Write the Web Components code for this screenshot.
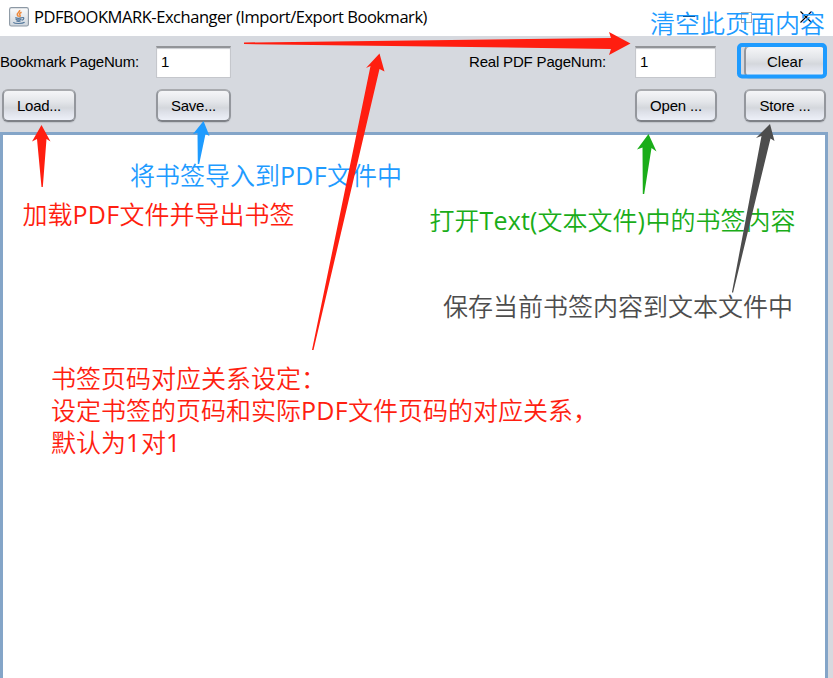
<!DOCTYPE html>
<html lang="zh-CN">
<head>
<meta charset="utf-8">
<title>PDFBOOKMARK-Exchanger</title>
<style>
html,body{margin:0;height:100%;overflow:hidden;background:#d6d9df}
body{font-family:"Liberation Sans",Arial,sans-serif;color:#000}
</style>
</head>
<body>
<bookmark-app></bookmark-app>
<script>
function define(name, html, setup) {
  const template = document.createElement('template');
  template.innerHTML = html.trim().replace(/>\s+</g, '><');
  customElements.define(name, class extends HTMLElement {
    constructor() {
      super();
      this.attachShadow({ mode: 'open' }).append(template.content.cloneNode(true));
    }
    connectedCallback() { if (setup) setup(this, this.shadowRoot); }
  });
}

// Text run whose letter spacing is tuned to fill the width given in "fit".
define('fit-text', `
<style>:host{display:inline-block;white-space:pre}:host([latin]){font-weight:400}span{display:inline-block}</style>
<span><slot></slot></span>`, (host, root) => {
  const span = root.querySelector('span');
  const target = parseFloat(host.getAttribute('fit'));
  const n = host.textContent.length;
  span.style.letterSpacing = ((target - span.getBoundingClientRect().width) / n) + 'px';
});

define('java-icon', `
<style>:host{display:block;width:20px;height:20px}svg{display:block}</style>
<svg width="20" height="20" viewBox="0 0 20 20">
  <defs><linearGradient id="g" x2="0" y2="1"><stop stop-color="#fcfcfc"/><stop offset="1" stop-color="#cfd6dd"/></linearGradient></defs>
  <rect x=".6" y=".6" width="18.8" height="18.4" rx="1.8" fill="url(#g)" stroke="#8c98a4" stroke-width="1.1"/>
  <path d="M10.6 3c1 1.9-3.3 3-2.3 4.8.4.8 1 1.200 1.200 1.900M12.600 5.300c-2 .8-2.600 1.600-1.700 2.700.5.7.2 1.300-.5 1.800" fill="none" stroke="#ef8a3c" stroke-width="1.500"/>
  <path d="M6.300 10.600c1.500.7 5 .6 6.500 0M6.600 12.300c1.500.6 4.400.6 5.700 0M7.400 13.900c1.300.5 3 .5 4.200 0M12.900 10.700c2.600-.9 2.500 2-.3 2.600M4.300 15.400c1.500 1.500 9 1.500 11.300-.2" fill="none" stroke="#54789c" stroke-width="1.200"/>
</svg>`);

define('title-bar', `
<style>
:host{display:flex;height:36px;background:#fff;align-items:center;box-sizing:border-box;padding:0 21px 2px 9px}
.t{flex:1;margin-left:5px;font:16.5px/24px "Open Sans","Noto Sans",sans-serif}
.c{display:flex;align-items:center}
svg{display:block}
</style>
<java-icon></java-icon>
<div class="t"><slot></slot></div>
<div class="c">
<svg width="130" height="14" viewBox="0 0 130 14" fill="none"><path d="M1 6.500h12" stroke="#000"/><rect x="59.500" y="2.500" width="10" height="10" stroke="#aaa"/><path d="M118.500 1.500l11 11M129.500 1.500l-11 11" stroke="#000" stroke-width="1.100"/></svg>
</div>`);

define('nimbus-button', `
<style>
:host{display:flex;box-sizing:border-box;height:33px;border:2px solid;border-color:#a9abaf #94979d #7e8187 #94979d;border-radius:6px;
background:linear-gradient(#f5f6f8 0%,#e3e5e9 38%,#d4d7dc 58%,#dde0e8 72%,#edf0f8 100%);align-items:center;justify-content:center;font-size:15px;line-height:17px;box-shadow:0 1px 1px #bfc2c8}
</style><slot></slot>`);

define('num-field', `
<style>
:host{display:flex;box-sizing:border-box;height:32px;background:#fff;border:1px solid #c5c7cc;border-top:2px solid #929498;box-shadow:inset 0 1px 1px #c9cbd0;align-items:center;padding:0 4px 1px;font-size:15px;line-height:17px}
</style><slot></slot>`);

define('tool-panel', `
<style>
:host{display:grid;box-sizing:border-box;height:96px;background:#d6d9df;
grid-template-columns:154px 76px 237px 166px 83px 27px 82px;grid-template-rows:33px 33px;row-gap:11px;padding:9px 0 10px 1px;align-items:center;font-size:15px}
.l{line-height:17px;margin-left:-1px}
.a{grid-column:2;margin-left:1px}.b{grid-column:4;margin-left:1px}.d{grid-column:5;margin-left:1px}.e{grid-column:7}
.load{grid-column:1;width:74px;margin-left:1px}
nimbus-button,num-field{white-space:nowrap}
num-field.d{margin-right:1px}
</style>
<div class="l"><fit-text fit="139">Bookmark PageNum:</fit-text></div>
<num-field class="a">1</num-field>
<div class="b"><fit-text fit="137">Real PDF PageNum:</fit-text></div>
<num-field class="d">1</num-field>
<nimbus-button class="e"><fit-text fit="36">Clear</fit-text></nimbus-button>
<nimbus-button class="load"><fit-text fit="44">Load...</fit-text></nimbus-button>
<nimbus-button class="a"><fit-text fit="45">Save...</fit-text></nimbus-button>
<nimbus-button class="d"><fit-text fit="52">Open ...</fit-text></nimbus-button>
<nimbus-button class="e"><fit-text fit="51">Store ...</fit-text></nimbus-button>`);

define('text-area', `
<style>
:host{display:block;flex:1;box-sizing:border-box;margin-right:5px;background:#fff;border:3px solid #84a5c8;border-bottom:0}
</style>`);

// Coloured caption pinned above the window content.
define('note-text', `
<style>
:host{position:absolute;white-space:pre;font:25px/32px "Open Sans","Noto Sans CJK SC",sans-serif;font-weight:350}
</style><slot></slot>`, host => {
  host.style.left = host.getAttribute('x') + 'px';
  host.style.top = host.getAttribute('y') + 'px';
  host.style.color = host.getAttribute('color');
});

define('arrow-layer', `
<style>:host{position:absolute;inset:0;pointer-events:none}svg{display:block}</style>
<svg width="833" height="678" viewBox="0 0 833 678">
  <g fill="#ff1e10">
    <path d="M244 42.500L611 38L609 32L630.500 43.500L609 55L611 49L244 44Z"/>
    <path d="M379.500 53.500L384.500 71.500L379.500 69L313.500 350H312L370.500 66L366 68Z"/>
    <path d="M41.500 125L50.500 141.500L46.500 139L42.800 187H41.500L37 139L32 141.500Z"/>
  </g>
  <path fill="#1e9bff" d="M203.500 121L209.500 136L205.500 134L199.200 164H197.800L197.500 133L193 134Z"/>
  <path fill="#1aad19" d="M648.500 134L656.500 151.500L651.500 148L644.200 194H642.800L642.500 147.500L637 149.500Z"/>
  <path fill="#4d4d4d" d="M770 124L774.500 141L770.500 138.500L733 293L732 292L761.500 136L756 138Z"/>
  <rect x="739" y="45" width="86" height="31.500" rx="3" fill="none" stroke="#1e9bff" stroke-width="4"/>
</svg>`);

define('bookmark-app', `
<style>:host{position:relative;display:flex;flex-direction:column;width:833px;height:678px;overflow:hidden}</style>
<title-bar><fit-text fit="393">PDFBOOKMARK-Exchanger (Import/Export Bookmark)</fit-text></title-bar>
<tool-panel></tool-panel>
<text-area></text-area>
<note-text x="650" y="7" color="#1e9bff"><fit-text fit="175">清空此页面内容</fit-text></note-text>
<note-text x="130" y="159" color="#1e9bff"><fit-text fit="150">将书签导入到</fit-text><fit-text latin fit="47">PDF</fit-text><fit-text fit="75">文件中</fit-text></note-text>
<note-text x="22.500" y="198" color="#ff1e10"><fit-text fit="50">加载</fit-text><fit-text latin fit="47">PDF</fit-text><fit-text fit="175">文件并导出书签</fit-text></note-text>
<note-text x="429.500" y="204" color="#1aad19"><fit-text fit="50">打开</fit-text><fit-text latin fit="58">Text(</fit-text><fit-text fit="100">文本文件</fit-text><fit-text latin fit="8">)</fit-text><fit-text fit="150">中的书签内容</fit-text></note-text>
<note-text x="443" y="290" color="#4d4d4d"><fit-text fit="350">保存当前书签内容到文本文件中</fit-text></note-text>
<note-text x="51" y="362" color="#ff1e10"><fit-text fit="275">书签页码对应关系设定：</fit-text></note-text>
<note-text x="51" y="394" color="#ff1e10"><fit-text fit="250">设定书签的页码和实际</fit-text><fit-text latin fit="47">PDF</fit-text><fit-text fit="250">文件页码的对应关系，</fit-text></note-text>
<note-text x="51" y="426" color="#ff1e10"><fit-text fit="75">默认为</fit-text><fit-text latin fit="15">1</fit-text><fit-text fit="25">对</fit-text><fit-text latin fit="14">1</fit-text></note-text>
<arrow-layer></arrow-layer>`);
</script>
</body>
</html>
